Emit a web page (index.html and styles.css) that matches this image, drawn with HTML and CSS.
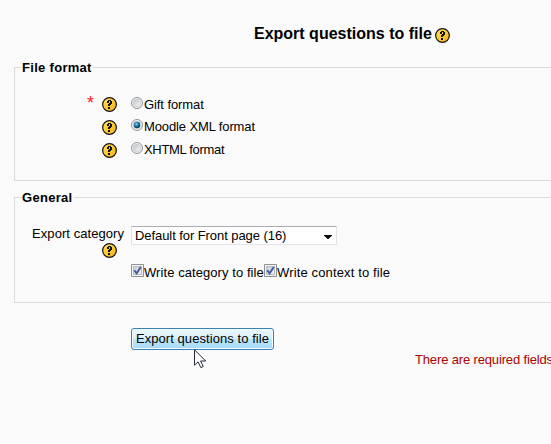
FILE: index.html
```html
<!DOCTYPE html>
<html lang="en">
<head>
<meta charset="utf-8">
<title>Export questions to file</title>
<link rel="stylesheet" href="styles.css">
</head>
<body>
<svg class="defs" width="0" height="0" aria-hidden="true">
  <defs>
    <linearGradient id="gold" x1="0" y1="0" x2="1" y2="1"><stop offset="0" stop-color="#ffe45c"/><stop offset=".5" stop-color="#fdc932"/><stop offset="1" stop-color="#eeb01c"/></linearGradient>
    <linearGradient id="tick-bg" x1="0" y1="0" x2="1" y2="1"><stop offset="0" stop-color="#c5cad2"/><stop offset="1" stop-color="#f6f6f8"/></linearGradient>
    <linearGradient id="radio-bg" x1="0" y1="0" x2="1" y2="1"><stop offset="0" stop-color="#bfc4c9"/><stop offset="1" stop-color="#f8f8f8"/></linearGradient>
    <radialGradient id="dot" cx=".4" cy=".35" r=".65"><stop offset="0" stop-color="#8ee0fa"/><stop offset=".45" stop-color="#217fae"/><stop offset="1" stop-color="#0c3453"/></radialGradient>
    <symbol id="help" viewBox="0 0 15 15">
      <circle cx="7.5" cy="7.5" r="6.85" fill="url(#gold)" stroke="#111" stroke-width="1.2"/>
      <path d="M6 3h3v1h1v3H9v1H8v1H6V7h1V6h1V4H7v2H5V4h1zM6 10h2v2H6z" fill="#111"/>
    </symbol>
    <symbol id="radio" viewBox="0 0 12 12">
      <circle cx="6" cy="6" r="5.5" fill="#f6f6f6" stroke="#8f9294"/>
      <circle cx="6" cy="6" r="3.8" fill="url(#radio-bg)" stroke="#bcc0c4" stroke-width=".6"/>
    </symbol>
    <symbol id="check" viewBox="0 0 13 13">
      <path d="M.5.5h12v12H.5z" fill="#f6f6f6" stroke="#8e8f8f"/>
      <path d="M2.5 2.5h8v8h-8z" fill="url(#tick-bg)" stroke="#b5bac2"/>
      <path d="M3.3 6.2L5.6 9.3L9.8 2.9" fill="none" stroke="#46599c" stroke-width="1.9"/>
    </symbol>
  </defs>
</svg>
<form class="page">
  <h2 class="title"><span>Export questions to file</span><svg class="help"><use href="#help"/></svg></h2>
  <fieldset class="group formats">
    <legend>File format</legend>
    <div class="fields">
      <div class="side helps">
        <span class="required">*</span>
        <div class="help-list">
          <svg class="help"><use href="#help"/></svg>
          <svg class="help"><use href="#help"/></svg>
          <svg class="help"><use href="#help"/></svg>
        </div>
      </div>
      <div class="radios">
        <label class="option"><svg class="radio"><use href="#radio"/></svg><span class="gift">Gift format</span></label>
        <label class="option"><svg class="radio" viewBox="0 0 12 12"><use href="#radio"/><circle cx="6" cy="6" r="3.2" fill="url(#dot)"/></svg><span class="moodle">Moodle XML format</span></label>
        <label class="option"><svg class="radio"><use href="#radio"/></svg><span class="xhtml">XHTML format</span></label>
      </div>
    </div>
  </fieldset>
  <fieldset class="group general">
    <legend>General</legend>
    <div class="fields">
      <div class="side category"><span>Export category</span><svg class="help"><use href="#help"/></svg></div>
      <div class="controls">
        <div class="select"><span>Default for Front page (16)</span><svg width="8" height="4" viewBox="0 0 8 4"><path d="M0 0h8v.5L4.5 4h-1L0 .5z"/></svg></div>
        <div class="checks">
          <label><svg class="check"><use href="#check"/></svg><span class="write-category">Write category to file</span></label>
          <label><svg class="check"><use href="#check"/></svg><span class="write-context">Write context to file</span></label>
        </div>
      </div>
    </div>
  </fieldset>
  <div class="actions"><button type="button" class="submit">Export questions to file</button></div>
  <p class="note">There are required fields</p>
</form>
<svg class="cursor" viewBox="0 0 13 20"><path d="M.5.8V16.2L4.1 12.9L6.8 18.6L9.2 17.5L6.6 12H11.7Z" fill="#fff" stroke="#222638"/></svg>
</body>
</html>
```
FILE: styles.css
```css
* { box-sizing: border-box; }
html, body { margin: 0; height: 100%; overflow: hidden; }
body {
  background: #fafafa;
  color: #000;
  font: 13px/15px "Liberation Sans", Arial, sans-serif;
}
svg { display: block; flex: none; }
.defs { position: absolute; }
.page { padding-left: 14px; }
.title {
  display: flex;
  height: 60px;
  margin: 0;
  padding: 24px 0 0 240px;
  font-size: 16px;
  line-height: 19px;
}
.title span { width: 179px; white-space: nowrap; }
.title .help { margin: 4px 0 0 2px; }
.help { width: 15px; height: 15px; }
.group {
  margin: 0;
  padding: 0;
  border: 1px solid #dcdcdc;
  border-right: 0;
  min-width: 0;
}
.group legend {
  height: 15px;
  margin-left: 7px;
  padding: 0 1px 0 0;
  font-weight: bold;
  letter-spacing: .3px;
}
.formats { height: 121px; }
.general { height: 113px; margin-top: 9px; }
.fields { display: flex; gap: 7px; }
.side { width: 109px; }
.helps { display: flex; justify-content: flex-end; gap: 8px; padding: 22px 7px 0 0; }
.help-list { display: flex; flex-direction: column; gap: 8px; }
.required { margin-top: -3px; color: #ff2020; font-size: 18px; line-height: 18px; }
.radios { display: flex; flex-direction: column; gap: 8px; padding-top: 22px; }
.option { display: flex; height: 15px; gap: 1px; white-space: nowrap; }
.option + .option { margin-top: -1px; }
.option:last-child { margin-top: 0; }
.gift { letter-spacing: -.08px; }
.moodle { letter-spacing: -.12px; }
.xhtml { letter-spacing: -.32px; }
.radio { width: 12px; height: 12px; }
.category {
  display: flex;
  flex-direction: column;
  align-items: flex-end;
  padding-top: 21px;
  letter-spacing: .06px;
  white-space: nowrap;
}
.category .help { margin: 2px 7px 0 0; }
.controls { padding-top: 21px; }
.select {
  display: flex;
  align-items: center;
  justify-content: space-between;
  width: 206px;
  height: 19px;
  padding: 0 4px 0 3px;
  border: 1px solid #e2e4ea;
  border-top-color: #abadb3;
  border-radius: 1px;
  background: #fff;
  letter-spacing: -.07px;
}
.select svg { margin-top: 3px; }
.checks { display: flex; margin-top: 19px; }
.checks label { display: flex; white-space: nowrap; }
.check { width: 13px; height: 13px; }
.checks span { padding-top: 1px; }
.write-category { width: 120px; letter-spacing: .07px; }
.write-context { letter-spacing: .14px; }
.actions { margin: 25px 0 0 117px; }
.submit {
  display: block;
  width: 143px;
  height: 22px;
  padding: 0 0 2px;
  border: 1px solid #3c7fb1;
  border-radius: 3px;
  background: linear-gradient(#eaf6fd 0, #d9f0fc 50%, #bee6fd 50%, #a7d9f5 100%);
  box-shadow: inset 0 0 0 1px #f2fbff;
  color: #000;
  font: inherit;
  letter-spacing: .07px;
  white-space: nowrap;
}
.note { margin: 2px 0 0 401px; color: #a00; letter-spacing: -.15px; white-space: nowrap; }
.cursor { position: absolute; left: 194px; top: 349px; width: 13px; height: 20px; }
```
